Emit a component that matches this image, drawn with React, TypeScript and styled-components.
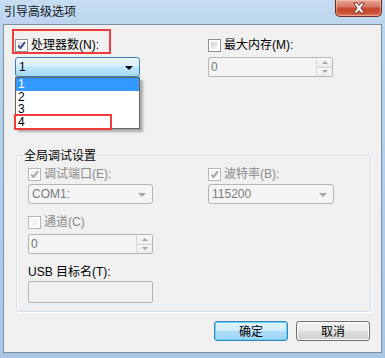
import React from 'react';
import styled, { createGlobalStyle, css } from 'styled-components';

const GlobalStyle = createGlobalStyle`
  html, body {
    margin: 0;
    padding: 0;
    background: #b9d2ec;
  }
  body {
    font-family: "Liberation Sans", "Noto Sans CJK SC", sans-serif;
    font-size: 12px;
    color: #000;
  }
  * {
    box-sizing: border-box;
  }
`;

const Frame = styled.div`
  width: 385px;
  height: 358px;
  display: flex;
  flex-direction: column;
  background: linear-gradient(to bottom, #c6dcf2 0px, #bcd5ee 24px, #b2cdea 200px, #a9c6e6 358px);
  overflow: hidden;
`;

const TitleBar = styled.div`
  height: 24px;
  display: flex;
  align-items: flex-start;
  padding-left: 4px;
`;

const Title = styled.div`
  font-family: "Noto Sans CJK SC", sans-serif;
  font-size: 12px;
  line-height: 14px;
  margin-top: 4px;
  color: #101820;
`;

const CloseButton = styled.div`
  margin-left: auto;
  margin-right: 3px;
  width: 47px;
  height: 17px;
  border: 1px solid #6e2a20;
  border-top: none;
  border-radius: 0 0 5px 5px;
  background: linear-gradient(to bottom, #e8a495 0%, #d77a66 40%, #c5462f 55%, #cc5136 80%, #e07a5c 100%);
  box-shadow: inset 0 0 0 1px rgba(255, 220, 210, 0.45);
  display: flex;
  align-items: center;
  justify-content: center;
`;

const Client = styled.div`
  flex: 1;
  margin: 0 3px 5px 3px;
  border: 1px solid #7d8fa2;
  background: #f0f0f0;
  display: flex;
  flex-direction: column;
`;

const TopSection = styled.div`
  display: flex;
  padding: 4px 0 0 8px;
`;

const Column = styled.div<{ $width?: number }>`
  display: flex;
  flex-direction: column;
  align-items: flex-start;
  ${p => p.$width && css`width: ${p.$width}px;`}
`;

const RedBox = styled.div`
  width: 99px;
  height: 25px;
  border: 2px solid #f23c3c;
  padding: 8px 0 0 1px;
`;

const CheckRow = styled.label<{ $disabled?: boolean; $top?: number }>`
  display: flex;
  align-items: center;
  height: 13px;
  gap: 3px;
  line-height: 13px;
  white-space: nowrap;
  color: ${p => (p.$disabled ? '#8a8a8a' : '#000')};
  margin-top: ${p => p.$top ?? 0}px;
`;

const Box = styled.span<{ $disabled?: boolean }>`
  position: relative;
  width: 13px;
  height: 13px;
  flex: none;
  border: 1px solid ${p => (p.$disabled ? '#b8b8b8' : '#8e8f8f')};
  background: #fff;
  &::before {
    content: '';
    position: absolute;
    inset: 2px;
    background: ${p =>
      p.$disabled ? '#f2f2f2' : 'linear-gradient(135deg, #c9cdd3 0%, #e6e8eb 55%, #f8f8f8 100%)'};
  }
  svg {
    position: absolute;
    left: 0;
    top: 0;
  }
`;

const ComboWrap = styled.div<{ $top: number; $left?: number }>`
  position: relative;
  margin-top: ${p => p.$top}px;
  margin-left: ${p => p.$left ?? 0}px;
`;

const Combo = styled.div<{ $active?: boolean; $width: number }>`
  width: ${p => p.$width}px;
  height: 20px;
  border-radius: 3px;
  display: flex;
  align-items: center;
  padding: 0 6px 0 3px;
  line-height: 14px;
  ${p =>
    p.$active
      ? css`
          border: 1px solid #3c7fb1;
          background: linear-gradient(to bottom, #eaf6fd 0%, #d9f0fc 45%, #bee6fd 50%, #a7d9f5 100%);
          color: #000;
        `
      : css`
          border: 1px solid #b2b6ba;
          background: #f4f4f4;
          color: #7a7a7a;
        `}
`;

const ComboText = styled.span`
  flex: 1;
`;

const Arrow = styled.span<{ $active?: boolean }>`
  width: 0;
  height: 0;
  border-left: 4px solid transparent;
  border-right: 4px solid transparent;
  border-top: 4px solid ${p => (p.$active ? '#000' : '#a6a6a6')};
  margin-top: 1px;
`;

const DropList = styled.div`
  position: absolute;
  top: 100%;
  left: 0;
  width: 125px;
  border: 1px solid #646464;
  background: #fff;
  box-shadow: 3px 3px 2px rgba(0, 0, 0, 0.28);
  z-index: 5;
`;

const DropItem = styled.div<{ $selected?: boolean }>`
  height: 12.5px;
  line-height: 12.5px;
  padding-left: 2px;
  background: ${p => (p.$selected ? '#3399ff' : 'transparent')};
  color: ${p => (p.$selected ? '#fff' : '#000')};
`;

const Highlight = styled.div`
  position: absolute;
  left: -2px;
  top: 36px;
  width: 98px;
  height: 16px;
  border: 2px solid #f23c3c;
`;

const Spin = styled.div<{ $top: number; $width: number }>`
  margin-top: ${p => p.$top}px;
  width: ${p => p.$width}px;
  height: 20px;
  border: 1px solid #b2b6ba;
  border-radius: 2px;
  background: #f4f4f4;
  color: #7a7a7a;
  display: flex;
  align-items: center;
  padding-left: 2px;
  line-height: 14px;
`;

const SpinButtons = styled.div`
  margin-left: auto;
  width: 16px;
  height: 100%;
  display: flex;
  flex-direction: column;
  border-left: 1px solid #d8d8d8;
`;

const SpinHalf = styled.div<{ $up?: boolean }>`
  flex: 1;
  display: flex;
  align-items: center;
  justify-content: center;
  background: linear-gradient(to bottom, #f7f7f7, #ececec);
  border-bottom: ${p => (p.$up ? '1px solid #d4d4d4' : 'none')};
  &::after {
    content: '';
    width: 0;
    height: 0;
    border-left: 3px solid transparent;
    border-right: 3px solid transparent;
    ${p =>
      p.$up ? 'border-bottom: 3px solid #a9a9a9;' : 'border-top: 3px solid #a9a9a9;'}
  }
`;

const GroupBox = styled.fieldset`
  position: relative;
  margin: 78px 0 0 12px;
  padding: 0 0 0 11px;
  width: 355px;
  height: 157px;
  border: 1px solid #d5dfe5;
  border-radius: 3px;
  box-shadow: inset 1px 1px 0 #fff, 1px 1px 0 #fff;
  display: flex;
`;

const Legend = styled.div`
  position: absolute;
  top: -9px;
  left: 6px;
  padding: 0 1px;
  background: #f0f0f0;
  font-family: "Noto Sans CJK SC", sans-serif;
  line-height: 16px;
`;

const Label = styled.div<{ $top: number }>`
  margin-top: ${p => p.$top}px;
  line-height: 14px;
  white-space: nowrap;
`;

const TextInput = styled.div<{ $top: number }>`
  margin-top: ${p => p.$top}px;
  width: 125px;
  height: 22px;
  border: 1px solid #b2b6ba;
  border-radius: 2px;
  background: #f0f0f0;
`;

const ButtonRow = styled.div`
  display: flex;
  justify-content: flex-end;
  gap: 8px;
  margin: 9px 11px 0 0;
`;

const Button = styled.div<{ $default?: boolean }>`
  width: 74px;
  height: 20px;
  border-radius: 3px;
  display: flex;
  align-items: center;
  justify-content: center;
  font-family: "Noto Sans CJK SC", sans-serif;
  line-height: 14px;
  ${p =>
    p.$default
      ? css`
          border: 1px solid #3c7fb1;
          background: linear-gradient(to bottom, #e3f4fc 0%, #cdebfa 50%, #aadcf6 52%, #9fd6f4 100%);
          box-shadow: inset 0 0 0 1px #5fd6fb;
        `
      : css`
          border: 1px solid #707070;
          background: linear-gradient(to bottom, #f2f2f2 0%, #ebebeb 50%, #dddddd 52%, #cfcfcf 100%);
          box-shadow: inset 0 0 0 1px #fcfcfc;
        `}
`;

const CheckBox: React.FC<{ checked?: boolean; disabled?: boolean }> = ({ checked, disabled }) => (
  <Box $disabled={disabled}>
    {checked && (
      <svg width="11" height="11" viewBox="0 0 11 11">
        <path
          d="M2.2 5.6 L4.4 8.2 L9 2.2"
          fill="none"
          stroke={disabled ? '#a8a8a8' : '#3b4f86'}
          strokeWidth="1.9"
          strokeLinejoin="round"
        />
      </svg>
    )}
  </Box>
);

const App: React.FC = () => {
  return (
    <>
      <GlobalStyle />
      <Frame>
        <TitleBar>
          <Title>引导高级选项</Title>
          <CloseButton>
            <svg width="16" height="12" viewBox="0 0 16 12">
              <path
                d="M2.5 1 L6 1 L8 3.6 L10 1 L13.5 1 L9.8 6 L13.5 11 L10 11 L8 8.4 L6 11 L2.5 11 L6.2 6 Z"
                fill="#fff"
                stroke="#6a2a20"
                strokeWidth="0.9"
                strokeLinejoin="round"
              />
            </svg>
          </CloseButton>
        </TitleBar>
        <Client>
          <TopSection>
            <Column $width={196}>
              <RedBox>
                <CheckRow>
                  <CheckBox checked />
                  处理器数(N):
                </CheckRow>
              </RedBox>
              <ComboWrap $top={3} $left={3}>
                <Combo $active $width={125}>
                  <ComboText>1</ComboText>
                  <Arrow $active />
                </Combo>
                <DropList>
                  <DropItem $selected>1</DropItem>
                  <DropItem>2</DropItem>
                  <DropItem>3</DropItem>
                  <DropItem>4</DropItem>
                  <Highlight />
                </DropList>
              </ComboWrap>
            </Column>
            <Column>
              <CheckRow $top={10}>
                <CheckBox />
                最大内存(M):
              </CheckRow>
              <Spin $top={5} $width={125}>
                0
                <SpinButtons>
                  <SpinHalf $up />
                  <SpinHalf />
                </SpinButtons>
              </Spin>
            </Column>
          </TopSection>

          <GroupBox>
            <Legend>全局调试设置</Legend>
            <Column $width={180}>
              <CheckRow $disabled $top={12}>
                <CheckBox checked disabled />
                调试端口(E):
              </CheckRow>
              <ComboWrap $top={3}>
                <Combo $width={125}>
                  <ComboText>COM1:</ComboText>
                  <Arrow />
                </Combo>
              </ComboWrap>
              <CheckRow $disabled $top={12}>
                <CheckBox disabled />
                通道(C)
              </CheckRow>
              <Spin $top={5} $width={125}>
                0
                <SpinButtons>
                  <SpinHalf $up />
                  <SpinHalf />
                </SpinButtons>
              </Spin>
              <Label $top={11}>USB 目标名(T):</Label>
              <TextInput $top={2} />
            </Column>
            <Column>
              <CheckRow $disabled $top={12}>
                <CheckBox checked disabled />
                波特率(B):
              </CheckRow>
              <ComboWrap $top={3}>
                <Combo $width={126}>
                  <ComboText>115200</ComboText>
                  <Arrow />
                </Combo>
              </ComboWrap>
            </Column>
          </GroupBox>

          <ButtonRow>
            <Button $default>确定</Button>
            <Button>取消</Button>
          </ButtonRow>
        </Client>
      </Frame>
    </>
  );
};

export default App;
